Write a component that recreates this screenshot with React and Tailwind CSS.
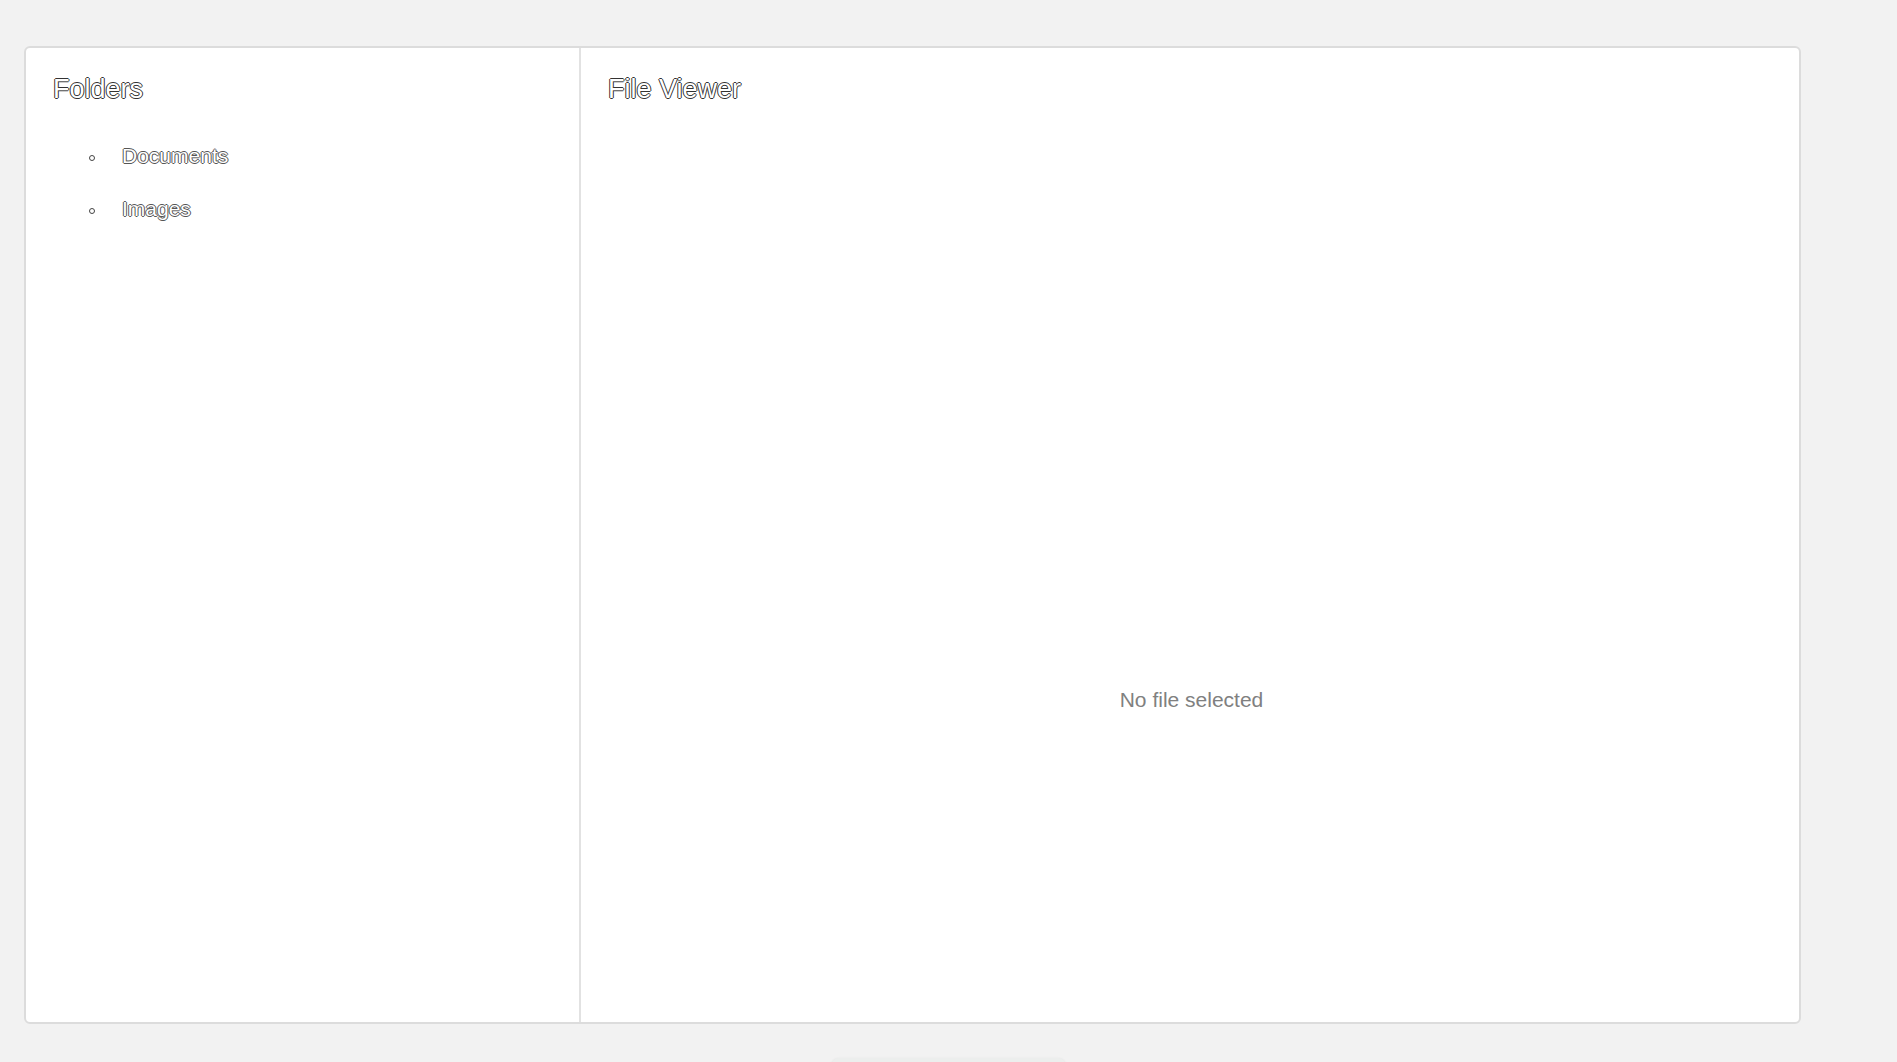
import React from 'react'

const folders = ["Documents", "Images"]

function FolderItem({name}){
  return(
    <li className="flex items-start h-[24px]">
      <span className="mt-[11px] w-[6px] h-[6px] rounded-full border border-[#444] bg-white shrink-0"></span>
      <span className="ml-[27px] text-[21px] leading-[24px] text-white [text-shadow:1px_0_#555,-1px_0_#555,0_1px_#555,0_-1px_#555]">{name}</span>
    </li>
  )
}

function App() {
  return (
    <div className="min-h-screen bg-[#f2f2f2] font-['Liberation_Sans',Arial,sans-serif] overflow-hidden">
      <div className="pt-[46px] pl-6">
        <div className="w-[1777px] h-[978px] flex bg-white border-2 border-[#dcdcdc] rounded-md">
          {/* folders */}
          <div className="w-[555px] shrink-0 border-r-2 border-[#e2e2e2] p-6 pt-[26px] pl-[27px]">
            <h2 className="text-[27px] leading-[31px] text-white [text-shadow:1px_0_#333,-1px_0_#333,0_1px_#333,0_-1px_#333]">Folders</h2>
            <ul className="mt-[39px] pl-[36px] flex flex-col gap-[29px]">
              {folders.map((f)=>(
                <FolderItem key={f} name={f}/>
              ))}
            </ul>
          </div>
          {/* viewer */}
          <div className="flex-1 flex flex-col p-6 pt-[26px] pl-[27px]">
            <h2 className="text-[27px] leading-[31px] text-white [text-shadow:1px_0_#333,-1px_0_#333,0_1px_#333,0_-1px_#333]">File Viewer</h2>
            <div className="flex-1 flex items-center justify-center pt-[296px]">
              <p className="text-[21px] leading-[24px] text-[#808080]">No file selected</p>
            </div>
          </div>
        </div>
      </div>
      <div className="mx-auto mt-[34px] w-[233px] h-[12px] bg-[#eceeed] rounded-t-md shadow-sm"></div>
    </div>
  );
}

export default App;
